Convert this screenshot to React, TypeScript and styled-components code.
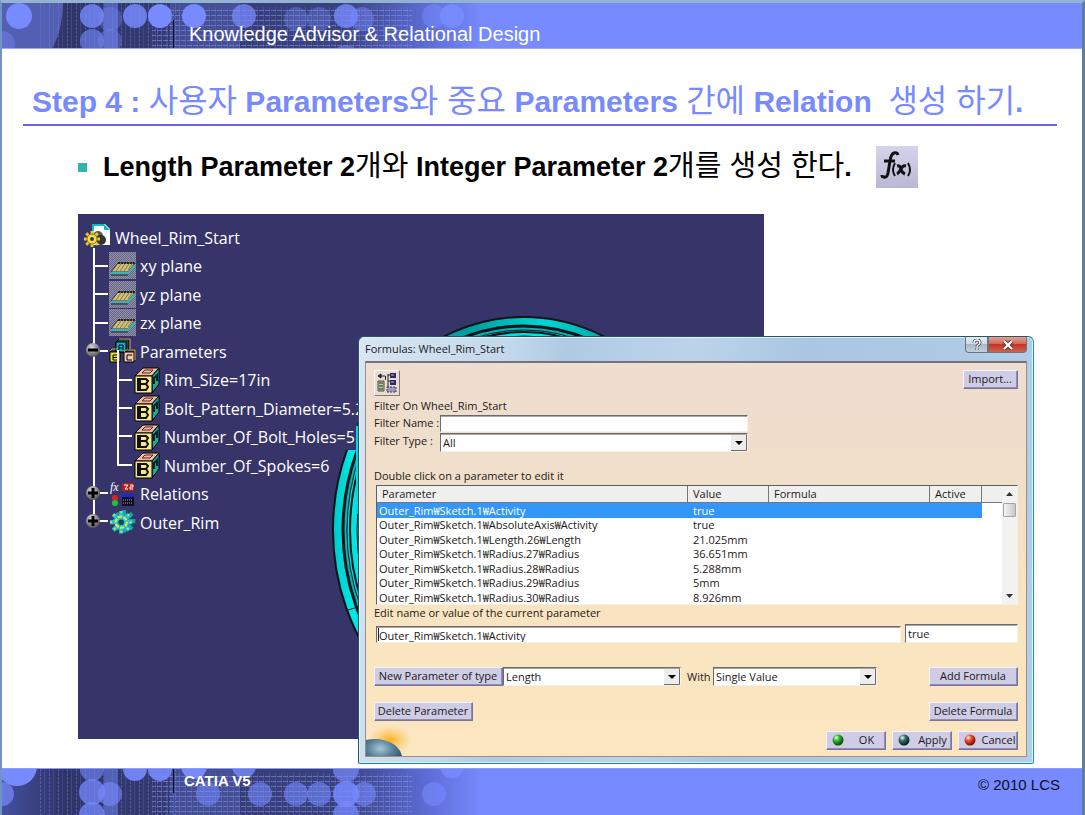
import React from 'react';
import styled, { createGlobalStyle, css } from 'styled-components';

const UI = '"Open Sans", "Noto Sans CJK KR", sans-serif';
const ARIAL = '"Liberation Sans", "Noto Sans CJK KR", sans-serif';

const GlobalStyle = createGlobalStyle`
  *, *::before, *::after { box-sizing: border-box; }
  body { margin: 0; background: #fff; font-family: ${ARIAL}; }
`;

/* ---------- slide frame ---------- */

const Slide = styled.div`
  min-height: 100vh;
  display: flex;
  flex-direction: column;
  border-left: 2px solid #6f93c4;
  border-right: 3px solid #5f7f9f;
  border-top: 3px solid #94b3d3;
`;

const Band = styled.div<{ $footer?: boolean }>`
  position: relative;
  display: flex;
  justify-content: ${p => (p.$footer ? 'space-between' : 'flex-start')};
  height: ${p => (p.$footer ? 47 : 46)}px;
  overflow: hidden;
  background: #778aff;
  color: #fff;
  ${p => (p.$footer ? 'border-top: 1px solid #8f9cf5;' : 'border-bottom: 1px solid #9aa6ff;')}
`;

const BandArt = styled.svg`
  position: absolute;
  left: 0;
  top: 0;
`;

const Course = styled.div`
  position: relative;
  padding: 18px 0 0 187px;
  font-size: 20px;
  line-height: 26px;
  white-space: nowrap;
`;

const Product = styled.div`
  position: relative;
  padding: 3px 0 0 182px;
  font-size: 15px;
  line-height: 17px;
  font-weight: 700;
`;

const Copyright = styled.div`
  position: relative;
  padding: 7px 22px 0 0;
  font-size: 15px;
  line-height: 17px;
  color: #10101c;
`;

const Body = styled.main`
  flex: 1;
  padding-bottom: 4px;
`;

const Title = styled.h1`
  margin: 31px 25px 0 21px;
  padding: 0 0 0 9px;
  border-bottom: 2px solid #6a60ee;
  font-size: 30px;
  line-height: 44px;
  font-weight: 700;
  color: #778aff;
  white-space: pre;
`;

const Ko = styled.span`
  font-size: 32px;
  line-height: 1;
  font-weight: 400;
`;

const KoSmall = styled(Ko)`
  font-size: 29px;
`;

const Bullet = styled.div`
  display: flex;
  align-items: center;
  margin: 20px 0 0 76px;
  height: 42px;
  font-size: 27px;
  line-height: 42px;
  font-weight: 700;
  color: #000;
  white-space: pre;
`;

const Square = styled.span`
  width: 9px;
  height: 9px;
  margin-right: 16px;
  background: #2fb5ad;
`;

const FxIcon = styled.svg`
  margin-left: 24px;
`;

/* ---------- overlapping windows ---------- */

const Stage = styled.div`
  display: grid;
  margin: 26px 48px 0 76px;
  grid-template-columns: minmax(0, 280fr) minmax(0, 406fr) minmax(0, 270fr);
  grid-template-rows: 122px auto 25px;
`;

const Canvas = styled.section`
  grid-area: 1 / 1 / 3 / 3;
  position: relative;
  overflow: hidden;
  background: #37346a;
`;

const Scene = styled.svg`
  position: absolute;
  left: 0;
  top: 0;
`;

const Tree = styled.ul`
  position: relative;
  list-style: none;
  margin: 0;
  padding: 9px 0 0;
  font-family: ${UI};
  font-size: 16px;
  color: #fff;
`;

const Node = styled.li<{ $level: number }>`
  display: flex;
  align-items: center;
  gap: 4px;
  height: 29px;
  padding-left: ${p => [6, 31, 55][p.$level]}px;
  white-space: nowrap;
  &:nth-child(even) { height: 28px; }
  svg { flex: none; }
`;

const Dialog = styled.section`
  grid-area: 2 / 2 / 4 / 4;
  position: relative;
  display: flex;
  flex-direction: column;
  padding: 0 6px 6px;
  border: 1px solid #2a5560;
  border-right-color: #0a9fc0;
  border-bottom-color: #0a8fa8;
  border-radius: 6px 6px 2px 2px;
  background: linear-gradient(100deg, #d9e6f2 0%, #c3d8ec 20%, #b0cae4 28%, #bdd3ea 45%, #aac6e2 60%, #b4cee8 100%);
  box-shadow: inset 0 0 0 1px #dff0fa;
  font-family: ${UI};
  font-size: 11px;
  line-height: 17px;
  color: #1c1a18;
`;

const TitleBar = styled.header`
  display: flex;
  justify-content: space-between;
  height: 24px;
`;

const Caption = styled.h2`
  margin: 3px 0 0;
  font-size: 11px;
  line-height: 17px;
  font-weight: 400;
`;

const WindowButtons = styled.div`
  display: flex;
  height: 16px;
`;

const WindowButton = styled.button<{ $close?: boolean }>`
  display: flex;
  align-items: center;
  justify-content: center;
  width: ${p => (p.$close ? 39 : 23)}px;
  padding: 0;
  border: 1px solid #6d7480;
  border-top: 0;
  border-radius: ${p => (p.$close ? '0 0 4px 0' : '0 0 0 4px')};
  background: ${p =>
    p.$close
      ? 'linear-gradient(#e0a095, #cf6a5a 45%, #c0382a 50%, #d4604c)'
      : 'linear-gradient(#e4ebf2, #cfd9e4 45%, #a9b8c8 50%, #c3d0dd)'};
`;

const Panel = styled.form`
  flex: 1;
  position: relative;
  display: flex;
  flex-direction: column;
  margin: 0;
  padding: 7px 8px 6px 8px;
  border: 1px solid #98908a;
  border-top: 2px solid #74727a;
  background: linear-gradient(#efddd0, #f0dfc9 30%, #f9e4c1 60%, #fbe6c0);
`;

const Planet = styled.svg`
  position: absolute;
  left: 0;
  bottom: 0;
`;

const Row = styled.div<{ $top?: number; $align?: string; $gap?: number }>`
  display: flex;
  align-items: ${p => p.$align || 'stretch'};
  gap: ${p => p.$gap || 0}px;
  position: relative;
  margin-top: ${p => p.$top || 0}px;
`;

const Spacer = styled.span`
  flex: 1;
`;

const captionText = css`
  padding-bottom: 2px;
  line-height: 15px;
  white-space: nowrap;
`;

const Note = styled.p<{ $top: number }>`
  ${captionText}
  margin: ${p => p.$top}px 0 0;
`;

const Label = styled.label<{ $w?: number }>`
  ${captionText}
  flex: none;
  width: ${p => (p.$w ? p.$w + 'px' : 'auto')};
`;

const WithLabel = styled(Label)`
  padding: 2px 0 0 6px;
`;

const bevel = css`
  border: 1px solid;
  border-color: #f4f2fa #77759c #77759c #f4f2fa;
  box-shadow: inset -1px -1px 0 #8f8db2;
  background: #cfcde6;
`;

const Button = styled.button<{ $w: number }>`
  ${bevel}
  display: flex;
  align-items: center;
  justify-content: center;
  gap: 5px;
  flex: none;
  width: ${p => p.$w}px;
  height: 19px;
  padding: 0 1px 1px 0;
  font: 11px/16px ${UI};
  color: #1c1a18;
  white-space: nowrap;
`;

const ActionButton = styled(Button)`
  justify-content: flex-start;
  padding-left: 5px;
`;

const ActionText = styled.span`
  flex: 1;
  text-align: center;
`;

const IconButton = styled.button`
  width: 26px;
  height: 26px;
  padding: 0;
  border: 1px solid;
  border-color: #fffaf4 #807a78 #807a78 #fffaf4;
  background: #e9ddd2;
  svg { display: block; }
`;

const sunken = css`
  border: 1px solid;
  border-color: #6b6a6c #f6f0e6 #f6f0e6 #6b6a6c;
  box-shadow: inset 0 1px 0 #a9a6a4;
  background: #fff;
  font: 11px/15px ${UI};
  color: #1c1a18;
  border-radius: 0;
  outline: 0;
`;

const TextBox = styled.input<{ $w?: number; $h?: number }>`
  ${sunken}
  ${p => (p.$w ? `flex: 0 0 ${p.$w}px; width: ${p.$w}px;` : 'flex: 1; min-width: 0;')}
  height: ${p => p.$h || 17}px;
  padding: 0 2px;
`;

const NameEditor = styled.span`
  position: relative;
  display: flex;
  flex: 1;
  margin: 0 4px 0 2px;
`;

const Field = styled.span<{ $w: number }>`
  position: relative;
  display: flex;
  flex: 0 1 ${p => p.$w}px;
  height: 19px;
`;

const Select = styled.select`
  ${sunken}
  appearance: none;
  width: 100%;
  height: 100%;
  padding: 0 18px 0 2px;
`;

const Arrow = styled.svg`
  position: absolute;
  right: 1px;
  top: 2px;
  pointer-events: none;
`;

const Caret = styled.span`
  position: absolute;
  left: 2px;
  top: 2px;
  width: 1px;
  height: 13px;
  background: #222;
`;

const ListBox = styled.div`
  display: flex;
  height: 120px;
  margin: 0 0 0 2px;
  border: 1px solid;
  border-color: #5f5e60 #f6f0e6 #f6f0e6 #5f5e60;
  background: #fff;
  overflow: hidden;
`;

const Table = styled.table`
  flex: 1;
  align-self: flex-start;
  width: 100%;
  table-layout: fixed;
  border-collapse: separate;
  border-spacing: 0;
  th {
    height: 17px;
    padding: 0 0 0 5px;
    border-right: 1px solid #77767a;
    border-bottom: 1px solid #77767a;
    background: #f1efed;
    font-weight: 400;
    text-align: left;
    line-height: 16px;
  }
  th:last-child { border-right: 0; }
`;

const DataRow = styled.tr<{ $selected?: boolean }>`
  height: 15px;
  &:nth-child(even) { height: 14px; }
  td {
    padding: 0 0 0 5px;
    line-height: 14px;
    white-space: nowrap;
  }
  td:first-child { padding-left: 2px; }
  td:not(:last-child) {
    ${p => p.$selected && 'background: #3296fa; color: #fff;'}
  }
`;

const ScrollBar = styled.div`
  display: flex;
  flex-direction: column;
  align-items: center;
  flex: none;
  width: 15px;
  background: #f3f2f1;
`;

const Thumb = styled.span`
  width: 13px;
  height: 14px;
  margin-bottom: auto;
  border: 1px solid #a5a5a8;
  border-radius: 1px;
  background: linear-gradient(90deg, #f4f4f4, #c9c9cc);
`;

/* ---------- drawings ---------- */

type Dot = [number, number, number, number];

const headerDots: Dot[] = [
  [17, 13, 13, 1], [0, 41, 13, 0.4], [90, 13, 12, 0.8], [90, 38, 12, 0.6], [108, 16, 12, 0.35],
  [108, 38, 12, 0.35], [133, 13, 12, 0.85], [158, 13, 12, 1], [133, 58, 13, 0.5], [192, 13, 12, 1],
  [242, 13, 12, 0.75], [294, 16, 12, 0.35], [317, 16, 12, 0.35], [344, 13, 12, 0.8], [360, 16, 12, 0.45],
  [432, 13, 12, 0.5], [450, 13, 12, 1], [192, 58, 13, 0.6], [344, 58, 16, 0.5],
];

const footerDots: Dot[] = [
  [15, -3, 20, 1], [0, 25, 12, 0.7], [90, 0, 12, 0.6], [90, 23, 13, 0.75], [90, 46, 13, 0.75],
  [108, 25, 12, 0.6], [133, 0, 12, 0.9], [158, 0, 12, 0.9], [192, -3, 13, 1], [242, -3, 12, 0.8],
  [206, 25, 12, 0.55], [258, 25, 12, 0.6], [294, 25, 12, 0.6], [317, 25, 12, 0.6], [344, 0, 13, 0.7],
  [344, 25, 13, 0.85], [344, 46, 13, 0.75], [362, 25, 12, 0.6], [432, 25, 12, 0.6], [450, -3, 12, 0.9],
];

function Pattern({ id, dots, line }: { id: string; dots: Dot[]; line: [number, number] }) {
  return (
    <BandArt width="500" height="47" viewBox="0 0 500 47" aria-hidden="true">
      <defs>
        <linearGradient id={`${id}f`}>
          <stop offset="0" stopColor="#4450a0" />
          <stop offset=".12" stopColor="#303566" />
          <stop offset=".3" stopColor="#343a70" />
          <stop offset=".68" stopColor="#3a427e" />
          <stop offset=".84" stopColor="#5b6ad0" />
          <stop offset=".96" stopColor="#778aff" />
        </linearGradient>
        <pattern id={`${id}v`} width="9" height="47" patternUnits="userSpaceOnUse">
          <path d="M2.5 0v47" stroke="#6f7fe6" strokeOpacity=".45" strokeDasharray="3 1" />
          <path d="M6.5 0v47" stroke="#6474d8" strokeOpacity=".25" />
        </pattern>
        <pattern id={`${id}h`} width="6" height="5" patternUnits="userSpaceOnUse">
          <path d="M0 2.5h6" stroke="#8390ee" strokeOpacity=".6" strokeDasharray="4 1" />
          <path d="M3.5 0v5" stroke="#8390ee" strokeOpacity=".2" />
        </pattern>
      </defs>
      <rect width="500" height="47" fill={`url(#${id}f)`} />
      {id === 'top' && <path d="M0 0H61Q60 30 49 47H0z" fill="#5360b2" />}
      <rect x="102" width="14" height="47" fill="#5361b4" />
      <rect x="168" width="70" height="47" fill="#5361b4" opacity=".5" />
      <rect x="38" width="140" height="47" fill={`url(#${id}v)`} />
      <rect x="150" y="4" width="260" height="43" fill={`url(#${id}h)`} />
      {dots.map(([x, y, r, o], i) => (
        <circle key={i} cx={x} cy={y} r={r} fill="#778aff" opacity={o} />
      ))}
      <path d={`M171.5 ${line[0]}V${line[1]}`} stroke="#0c0c1c" />
    </BandArt>
  );
}

function WheelScene() {
  const rings: [number, number, string, number][] = [
    [191, 213, 'url(#rim)', 2], [181, 204, '#00b4b8', 3], [177, 200, '#00d8da', 1],
    [174, 198, '#00e4e4', 2], [167, 194, '#00eaea', 1],
  ];
  return (
    <Scene width="686" height="525" viewBox="0 0 686 525" aria-hidden="true">
      <defs>
        <linearGradient id="rim">
          <stop offset="0" stopColor="#00c8c8" />
          <stop offset=".05" stopColor="#00e8e6" />
          <stop offset=".35" stopColor="#009a9c" />
          <stop offset=".55" stopColor="#00d6d6" />
          <stop offset=".8" stopColor="#008f92" />
        </linearGradient>
        <radialGradient id="ball" cx=".4" cy=".3" r=".8">
          <stop offset="0" stopColor="#d8d8d8" />
          <stop offset="1" stopColor="#444" />
        </radialGradient>
      </defs>
      {rings.map(([rx, ry, fill, w]) => (
        <ellipse key={rx} cx="446" cy="316" rx={rx} ry={ry} fill={fill} stroke="#041418" strokeWidth={w} />
      ))}
      <path d="M255 200H279V236H255z" fill="#37346a" />
      <path d="M279 212V300" stroke="#00d8da" strokeWidth="2" />
      <path d="M270 396l10-3" stroke="#041418" />
      <g stroke="#fff" strokeWidth="2" fill="none">
        <path d="M16 34V307M16 52H30M16 80H30M16 109H30M16 137H30M16 279H30M16 307H30" />
        <path d="M40 150V251H54M40 166H54M40 194H54M40 222H54" />
      </g>
      {[136, 279, 307].map((y, i) => (
        <g key={y}>
          <circle cx="15" cy={y} r="7" fill="url(#ball)" />
          <path d={i ? `M10 ${y}h10M15 ${y - 5}v10` : `M10 ${y}h10`} stroke="#000" strokeWidth="3" />
        </g>
      ))}
    </Scene>
  );
}

const gearTeeth = 'M8 0v16M0 8h16M2.3 2.3l11.4 11.4M13.7 2.3L2.3 13.7';

function PartIcon() {
  return (
    <svg width="27" height="27" viewBox="0 0 27 27">
      <path d="M8 0h13l5 5v16H8z" fill="#fff" />
      <path d="M8 0h12v2H10v5H8zM20 0l6 6h-6z" fill="#12b8c0" />
      <circle cx="14" cy="12" r="5" fill="#555" />
      <circle cx="17" cy="16" r="5" fill="#333" />
      <g transform="translate(0 7)">
        <path d={gearTeeth} stroke="#e8c832" strokeWidth="3" />
        <circle cx="8" cy="8" r="5" fill="#f4e04a" stroke="#8a6c10" />
        <circle cx="8" cy="8" r="2" fill="#37346a" />
      </g>
    </svg>
  );
}

function PlaneIcon() {
  return (
    <svg width="27" height="28" viewBox="0 0 27 28">
      <defs>
        <pattern id="hatch" width="2" height="2" patternUnits="userSpaceOnUse">
          <path d="M0 0h1v1h-1zM1 1h1v1h-1z" fill="#9292a6" />
        </pattern>
      </defs>
      <rect width="27" height="27" fill="#66668c" />
      <rect width="27" height="27" fill="url(#hatch)" />
      <path d="M2 20L9 11H26L19 20z" fill="#cdbf7c" stroke="#333" />
      <path d="M2 21H19L26 13" fill="none" stroke="#3ab0b8" strokeWidth="2" />
      <path d="M7 19l5-7M11 19l5-7M15 19l5-7M19 18l4-6" stroke="#8a7a40" />
      <path d="M9 11H26" stroke="#222" strokeWidth="2" strokeDasharray="2 1" />
      <path d="M2 23H19" stroke="#222" />
    </svg>
  );
}

function ParametersIcon() {
  return (
    <svg width="27" height="27" viewBox="0 0 27 27">
      <path d="M7 4l3-3h10v10l-3 3H7z" fill="#0a4a50" stroke="#000" />
      <path d="M7 4h10v10H7z" fill="#1ab0b4" stroke="#000" />
      <path d="M10 12V7h4v5M10 10h4" stroke="#003" fill="none" />
      <path d="M10 1h11v10" fill="none" stroke="#e8a060" />
      <path d="M1 14h10v10H1z" fill="#e8e040" stroke="#000" />
      <path d="M9 17H4v5h5M4 19.500h4" stroke="#000" fill="none" />
      <path d="M15 14h10v10H15z" fill="#f4c8b0" stroke="#000" />
      <path d="M23 17h-5v5h5" stroke="#000" fill="none" />
      <path d="M1 13l2-2h5M15 14l2-2h9v10" stroke="#caa030" fill="none" />
      <path d="M9 12V27" stroke="#fff" strokeWidth="2" />
    </svg>
  );
}

function BlockIcon() {
  return (
    <svg width="27" height="27" viewBox="0 0 27 27">
      <path d="M2 9L10 1H26L19 9z" fill="#f4b8a0" stroke="#000" />
      <path d="M19 9L26 1V17L19 26z" fill="#18a8a8" stroke="#000" />
      <path d="M2 9H19V26H2z" fill="#f8e88c" stroke="#000" />
      <path d="M5 12h8l2 2-2 3H5zM7 12v11M5 17h8l2 3-2 3H5z" fill="none" stroke="#111" strokeWidth="2" />
      <path d="M9 6l3-3h8l-3 3z" fill="none" stroke="#5a2a20" />
      <path d="M21 17v-6l3-3v6" fill="none" stroke="#022" strokeWidth="2" />
    </svg>
  );
}

function RelationsIcon() {
  return (
    <svg width="27" height="27" viewBox="0 0 27 27">
      <text x="1" y="10" fontFamily="Liberation Serif, serif" fontStyle="italic" fontSize="12" fill="#fff">fx</text>
      <rect x="13" y="2" width="12" height="8" fill="#b81c1c" />
      <path d="M15 4h4l-3 4h3M21 4h3v2h-3v2h3" stroke="#fff" fill="none" />
      <circle cx="6" cy="17" r="3" fill="#e02020" />
      <circle cx="6" cy="22" r="3" fill="#18c830" />
      <rect x="13" y="13" width="12" height="12" fill="#101020" />
      <rect x="13" y="13" width="12" height="3" fill="#1828d8" />
      <path d="M14 19h10M14 22h10" stroke="#99a" strokeDasharray="1 1" />
    </svg>
  );
}

function GearIcon() {
  return (
    <svg width="27" height="27" viewBox="0 0 27 27">
      <g transform="translate(4 1) scale(1.4)">
        <path d={gearTeeth} stroke="#0a3a48" strokeWidth="4" />
        <path d={gearTeeth} stroke="#18a0b0" strokeWidth="3" />
      </g>
      <g transform="translate(1 2) scale(1.4)">
        <path d={gearTeeth} stroke="#2fc0c8" strokeWidth="3" />
        <path d={gearTeeth} stroke="#c8e85a" strokeDasharray="1.500 2" />
        <circle cx="8" cy="8" r="5" fill="#28c4cc" />
        <circle cx="8" cy="8" r="4" fill="none" stroke="#e8e83a" strokeWidth="1.400" strokeDasharray="3 1" />
        <circle cx="8" cy="8" r="2" fill="#0b4a58" />
      </g>
    </svg>
  );
}

const DropArrow = () => (
  <Arrow width="16" height="16" viewBox="0 0 16 16" aria-hidden="true">
    <rect width="16" height="16" fill="#efedeb" />
    <path d="M0 15.5H15.5V0" fill="none" stroke="#6b6a6c" />
    <path d="M4 6h8l-4 4z" fill="#000" />
  </Arrow>
);

const Lamp = ({ color, dark }: { color: string; dark: string }) => (
  <svg width="12" height="12" viewBox="0 0 12 12" aria-hidden="true">
    <defs>
      <radialGradient id={`l${color.slice(1)}`} cx=".35" cy=".3" r=".7">
        <stop offset="0" stopColor="#f4fff4" />
        <stop offset=".4" stopColor={color} />
        <stop offset="1" stopColor={dark} />
      </radialGradient>
    </defs>
    <circle cx="6" cy="6" r="5.500" fill={`url(#l${color.slice(1)})`} />
  </svg>
);

/* ---------- data ---------- */

const nodes: [number, () => React.ReactElement, string][] = [
  [0, PartIcon, 'Wheel_Rim_Start'],
  [1, PlaneIcon, 'xy plane'],
  [1, PlaneIcon, 'yz plane'],
  [1, PlaneIcon, 'zx plane'],
  [1, ParametersIcon, 'Parameters'],
  [2, BlockIcon, 'Rim_Size=17in'],
  [2, BlockIcon, 'Bolt_Pattern_Diameter=5.2'],
  [2, BlockIcon, 'Number_Of_Bolt_Holes=5'],
  [2, BlockIcon, 'Number_Of_Spokes=6'],
  [1, RelationsIcon, 'Relations'],
  [1, GearIcon, 'Outer_Rim'],
];

const parameters = [
  ['Outer_Rim₩Sketch.1₩Activity', 'true'],
  ['Outer_Rim₩Sketch.1₩AbsoluteAxis₩Activity', 'true'],
  ['Outer_Rim₩Sketch.1₩Length.26₩Length', '21.025mm'],
  ['Outer_Rim₩Sketch.1₩Radius.27₩Radius', '36.651mm'],
  ['Outer_Rim₩Sketch.1₩Radius.28₩Radius', '5.288mm'],
  ['Outer_Rim₩Sketch.1₩Radius.29₩Radius', '5mm'],
  ['Outer_Rim₩Sketch.1₩Radius.30₩Radius', '8.926mm'],
];

function FormulasDialog() {
  return (
    <Dialog aria-label="Formulas">
      <TitleBar>
        <Caption>Formulas: Wheel_Rim_Start</Caption>
        <WindowButtons>
          <WindowButton type="button" aria-label="Help">
            <svg width="10" height="12" viewBox="0 0 10 12" fill="none">
              <path d="M2 4q0-3 3-3t3 3q0 1-2 2-1 .6-1 2M5 9v2" stroke="#444" strokeWidth="3" />
              <path d="M2 4q0-3 3-3t3 3q0 1-2 2-1 .6-1 2M5 9v2" stroke="#fff" strokeWidth="1.4" />
            </svg>
          </WindowButton>
          <WindowButton type="button" $close aria-label="Close">
            <svg width="12" height="10" viewBox="0 0 12 10">
              <path d="M2 1l8 8M10 1L2 9" stroke="#5a2a2a" strokeWidth="4" />
              <path d="M2 1l8 8M10 1L2 9" stroke="#fff" strokeWidth="2.4" />
            </svg>
          </WindowButton>
        </WindowButtons>
      </TitleBar>
      <Panel onSubmit={e => e.preventDefault()}>
        <Planet width="50" height="32" viewBox="0 0 50 32" aria-hidden="true">
          <defs>
            <radialGradient id="glow">
              <stop offset="0" stopColor="#ffae1a" />
              <stop offset="1" stopColor="#fbc860" stopOpacity="0" />
            </radialGradient>
            <radialGradient id="globe" cx=".6" cy=".25" r=".6">
              <stop offset="0" stopColor="#a4c6d8" />
              <stop offset=".4" stopColor="#5a8098" />
              <stop offset="1" stopColor="#1c2c38" />
            </radialGradient>
          </defs>
          <ellipse cx="24" cy="16" rx="22" ry="15" fill="url(#glow)" />
          <ellipse cx="9" cy="34" rx="27" ry="19" fill="url(#globe)" />
        </Planet>
        <Row $align="flex-start">
          <IconButton type="button" aria-label="Incremental filter">
            <svg width="24" height="24" viewBox="0 0 24 24">
              <path d="M3 5l3-2v4zM6 5h4M10.500 5v4" fill="#222" stroke="#222" />
              <path d="M3 10h6v10H3z" fill="#b9c6a4" stroke="#46503c" />
              <path d="M5 11v8M7 11v8" stroke="#2c3424" strokeDasharray="2 1" />
              <path d="M13 3v13M13 4h2M13 10h2" stroke="#222" />
              <path d="M15 2h6v5h-6zM15 9h6v5h-6z" fill="#2c2a66" />
              <path d="M16 4h3M16 11h3" stroke="#b8b8dc" />
              <path d="M12 16h9v5h-9z" fill="#9c9cb8" stroke="#34345c" strokeDasharray="2 1" />
            </svg>
          </IconButton>
          <Spacer />
          <Button type="button" $w={55}>Import...</Button>
        </Row>
        <Note $top={2}>Filter On Wheel_Rim_Start</Note>
        <Row>
          <Label htmlFor="fname" $w={66}>Filter Name :</Label>
          <TextBox id="fname" $w={308} />
        </Row>
        <Row $top={1}>
          <Label htmlFor="ftype" $w={66}>Filter Type :</Label>
          <Field $w={308}>
            <Select id="ftype"><option>All</option></Select>
            <DropArrow />
          </Field>
        </Row>
        <Note $top={16}>Double click on a parameter to edit it</Note>
        <ListBox>
          <Table>
            <colgroup>
              <col />
              <col style={{ width: 81 }} />
              <col style={{ width: 161 }} />
              <col style={{ width: 52 }} />
              <col style={{ width: 20 }} />
            </colgroup>
            <thead>
              <tr><th>Parameter</th><th>Value</th><th>Formula</th><th>Active</th><th /></tr>
            </thead>
            <tbody>
              {parameters.map(([name, value], i) => (
                <DataRow key={name} $selected={i === 0}>
                  <td>{name}</td><td>{value}</td><td /><td /><td />
                </DataRow>
              ))}
            </tbody>
          </Table>
          <ScrollBar aria-hidden="true">
            <svg width="13" height="17" viewBox="0 0 13 17"><path d="M3 10h7L6.500 6z" fill="#333" /></svg>
            <Thumb />
            <svg width="13" height="17" viewBox="0 0 13 17"><path d="M3 7h7l-3.500 4z" fill="#333" /></svg>
          </ScrollBar>
        </ListBox>
        <Label htmlFor="pname">Edit name or value of the current parameter</Label>
        <Row $top={2} $align="flex-end">
          <NameEditor>
            <TextBox id="pname" defaultValue="Outer_Rim₩Sketch.1₩Activity" />
            <Caret />
          </NameEditor>
          <TextBox $w={113} $h={19} aria-label="Value" defaultValue="true" />
        </Row>
        <Row $top={24}>
          <Button type="button" $w={129}>New Parameter of type</Button>
          <Field $w={178}>
            <Select aria-label="Parameter type"><option>Length</option></Select>
            <DropArrow />
          </Field>
          <WithLabel htmlFor="pwith" $w={32}>With</WithLabel>
          <Field $w={164}>
            <Select id="pwith"><option>Single Value</option></Select>
            <DropArrow />
          </Field>
          <Spacer />
          <Button type="button" $w={89}>Add Formula</Button>
        </Row>
        <Row $top={16}>
          <Button type="button" $w={99}>Delete Parameter</Button>
          <Spacer />
          <Button type="button" $w={89}>Delete Formula</Button>
        </Row>
        <Row $top={10} $gap={6}>
          <Spacer />
          <ActionButton type="submit" $w={60}><Lamp color="#2fb52f" dark="#064a06" /><ActionText>OK</ActionText></ActionButton>
          <ActionButton type="button" $w={60}><Lamp color="#3a7068" dark="#04201c" /><ActionText>Apply</ActionText></ActionButton>
          <ActionButton type="button" $w={60}><Lamp color="#f04a34" dark="#7c0c04" /><ActionText>Cancel</ActionText></ActionButton>
        </Row>
      </Panel>
    </Dialog>
  );
}

export default function App() {
  return (
    <Slide>
      <GlobalStyle />
      <Band as="header">
        <Pattern id="top" dots={headerDots} line={[17, 46]} />
        <Course>Knowledge Advisor &amp; Relational Design</Course>
      </Band>
      <Body>
        <Title>
          Step 4 : <Ko>사용자</Ko> Parameters<Ko>와 중요</Ko> Parameters <Ko>간에</Ko> Relation{'  '}<Ko>생성 하기</Ko>.
        </Title>
        <Bullet>
          <Square />
          <span>Length Parameter 2<KoSmall>개와</KoSmall> Integer Parameter 2<KoSmall>개를 생성 한다</KoSmall>.</span>
          <FxIcon width="42" height="42" viewBox="0 0 42 42" role="img" aria-label="Formula">
            <defs>
              <linearGradient id="fx" x2="0" y2="1">
                <stop offset="0" stopColor="#d6d4ec" />
                <stop offset="1" stopColor="#b9b7d2" />
              </linearGradient>
            </defs>
            <rect width="42" height="42" fill="url(#fx)" />
            <path d="M22 9q-1-3-4-2-3 1-4 8l-2 12q-1 5-4 4-2 0-2-2M8 15h11" fill="none" stroke="#111" strokeWidth="3" />
            <path d="M19 17q-4 7 0 13M32 17q4 7 0 13" fill="none" stroke="#111" strokeWidth="2" />
            <path d="M21 20q3-1 4 3t4 5M30 20q-3-1-5 3t-4 5" fill="none" stroke="#111" strokeWidth="3" />
          </FxIcon>
        </Bullet>
        <Stage>
          <Canvas>
            <WheelScene />
            <Tree>
              {nodes.map(([level, Icon, label]) => (
                <Node key={label} $level={level}><Icon />{label}</Node>
              ))}
            </Tree>
          </Canvas>
          <FormulasDialog />
        </Stage>
      </Body>
      <Band as="footer" $footer>
        <Pattern id="bottom" dots={footerDots} line={[0, 24]} />
        <Product>CATIA V5</Product>
        <Copyright>© 2010 LCS</Copyright>
      </Band>
    </Slide>
  );
}
